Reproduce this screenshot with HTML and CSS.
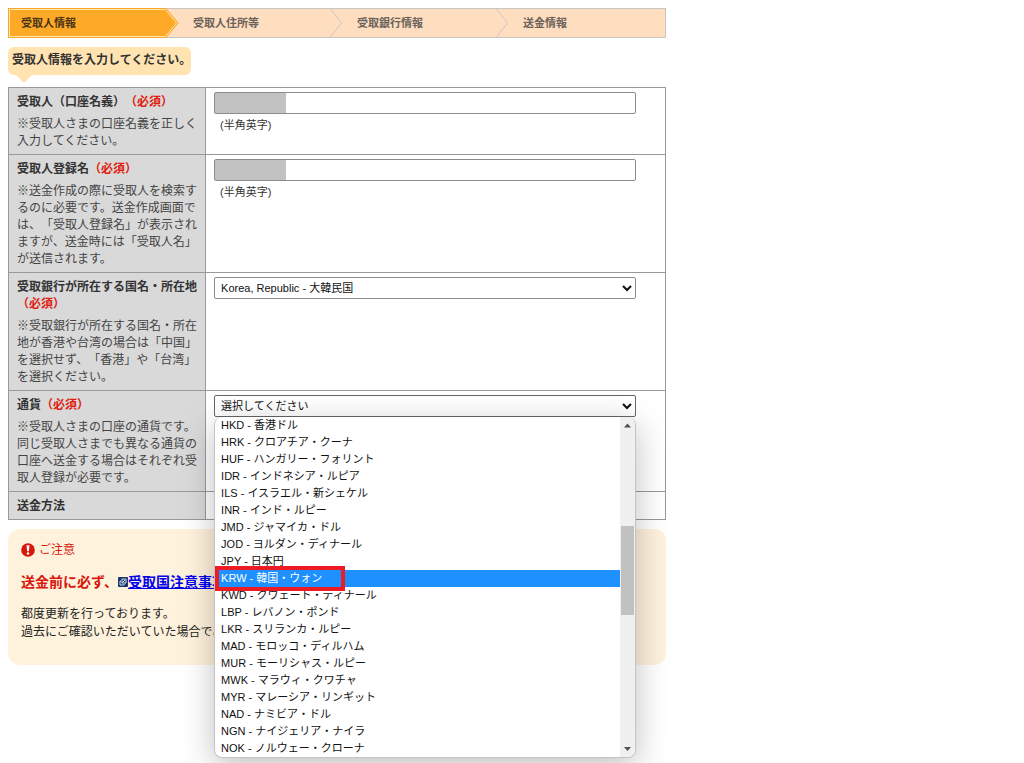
FILE: index.html
```html
<!DOCTYPE html>
<html lang="ja">
<head>
<meta charset="utf-8">
<meta name="viewport" content="width=device-width, initial-scale=1">
<title>受取人情報</title>
<link rel="stylesheet" href="styles.css">
</head>
<body>
<main class="page">
  <ol class="steps">
    <li class="step step-current" aria-current="step">
      <span>受取人情報</span>
      <svg class="step-arrow" viewBox="0 0 14 30" aria-hidden="true">
        <path d="M0 0H1L13.500 15L1 30H0Z" fill="#fca62b"/>
        <path d="M0 1.500H.5L11.500 15L.5 28.500H0" fill="#ffa929" stroke="#ffe9ae"/>
      </svg>
    </li>
    <li class="step">
      <span>受取人住所等</span>
      <svg class="step-arrow" viewBox="0 0 14 30" aria-hidden="true"><path d="M1 0L13 15L1 30" fill="none" stroke="#c8c5c2"/></svg>
    </li>
    <li class="step">
      <span>受取銀行情報</span>
      <svg class="step-arrow" viewBox="0 0 14 30" aria-hidden="true"><path d="M1 0L13 15L1 30" fill="none" stroke="#c8c5c2"/></svg>
    </li>
    <li class="step"><span>送金情報</span></li>
  </ol>

  <p class="bubble">受取人情報を入力してください。</p>

  <form>
    <table class="form-table">
      <tr>
        <th scope="row">
          <label for="payee">受取人（口座名義）<em class="required">（必須）</em></label>
          <p class="note">※受取人さまの口座名義を正しく入力してください。</p>
        </th>
        <td>
          <input class="field masked" id="payee" type="text">
          <p class="hint">(半角英字)</p>
        </td>
      </tr>
      <tr>
        <th scope="row">
          <label for="entry-name">受取人登録名<em class="required">（必須）</em></label>
          <p class="note">※送金作成の際に受取人を検索するのに必要です。送金作成画面では、「受取人登録名」が表示されますが、送金時には「受取人名」が送信されます。</p>
        </th>
        <td>
          <input class="field masked" id="entry-name" type="text">
          <p class="hint">(半角英字)</p>
        </td>
      </tr>
      <tr>
        <th scope="row">
          <label for="country">受取銀行が所在する国名・所在地<em class="required">（必須）</em></label>
          <p class="note">※受取銀行が所在する国名・所在地が香港や台湾の場合は「中国」を選択せず、「香港」や「台湾」を選択ください。</p>
        </th>
        <td>
          <select class="field" id="country"><option>Korea, Republic - 大韓民国</option></select>
        </td>
      </tr>
      <tr>
        <th scope="row">
          <label for="currency">通貨<em class="required">（必須）</em></label>
          <p class="note">※受取人さまの口座の通貨です。同じ受取人さまでも異なる通貨の口座へ送金する場合はそれぞれ受取人登録が必要です。</p>
        </th>
        <td>
          <div class="combo">
            <select class="field field-open" id="currency"><option>選択してください</option></select>
            <div class="popup">
              <ul class="options" role="listbox" aria-label="通貨">
                <li role="option">HKD - 香港ドル</li>
                <li role="option">HRK - クロアチア・クーナ</li>
                <li role="option">HUF - ハンガリー・フォリント</li>
                <li role="option">IDR - インドネシア・ルピア</li>
                <li role="option">ILS - イスラエル・新シェケル</li>
                <li role="option">INR - インド・ルピー</li>
                <li role="option">JMD - ジャマイカ・ドル</li>
                <li role="option">JOD - ヨルダン・ディナール</li>
                <li role="option">JPY - 日本円</li>
                <li role="option" class="selected" aria-selected="true">KRW - 韓国・ウォン</li>
                <li role="option">KWD - クウェート・ディナール</li>
                <li role="option">LBP - レバノン・ポンド</li>
                <li role="option">LKR - スリランカ・ルピー</li>
                <li role="option">MAD - モロッコ・ディルハム</li>
                <li role="option">MUR - モーリシャス・ルピー</li>
                <li role="option">MWK - マラウィ・クワチャ</li>
                <li role="option">MYR - マレーシア・リンギット</li>
                <li role="option">NAD - ナミビア・ドル</li>
                <li role="option">NGN - ナイジェリア・ナイラ</li>
                <li role="option">NOK - ノルウェー・クローナ</li>
              </ul>
              <div class="scrollbar" aria-hidden="true">
                <svg viewBox="0 0 15 16"><path d="M4 10.500L7.500 6.500L11 10.500Z" fill="#505050"/></svg>
                <div class="track"><div class="thumb"></div></div>
                <svg viewBox="0 0 15 16"><path d="M4 6L7.500 10L11 6Z" fill="#505050"/></svg>
              </div>
            </div>
          </div>
        </td>
      </tr>
      <tr>
        <th scope="row">送金方法</th>
        <td></td>
      </tr>
    </table>
  </form>

  <section class="notice">
    <h2 class="notice-title">
      <svg viewBox="0 0 14 14" aria-hidden="true">
        <circle cx="7" cy="7" r="6.800" fill="#d7170b"/>
        <path d="M5.500 2.300H8.500L7.900 8.200H6.100Z" fill="#fff"/>
        <circle cx="7" cy="10.500" r="1.300" fill="#fff"/>
      </svg>
      ご注意
    </h2>
    <p class="notice-lead">送金前に必ず、<svg viewBox="0 0 10 10" aria-hidden="true">
        <rect width="10" height="10" rx="1" fill="#17376e"/>
        <path d="M4 2H8V6H4ZM3 4H2V8H6V7" fill="none" stroke="#fff" stroke-width=".8"/>
        <path d="M4.500 5.500L7 3" stroke="#fff" stroke-width=".8"/>
      </svg><a href="#">受取国注意事項</a></p>
    <p>都度更新を行っております。<br>過去にご確認いただいていた場合であ</p>
  </section>
</main>
</body>
</html>
```
FILE: styles.css
```css
*,
*::before,
*::after {
  box-sizing: border-box;
}

body {
  min-height: 100vh;
  margin: 0;
  padding: 8px;
  background: #fff;
  color: #333;
  font-family: "Liberation Sans", "Noto Sans CJK JP", sans-serif;
  font-size: 12px;
  line-height: 17px;
  text-spacing-trim: space-all;
}

p,
h2,
ul,
ol {
  margin: 0;
  padding: 0;
}

.page {
  max-width: 658px;
}

/* Progress steps */
.steps {
  display: grid;
  grid-template-columns: 170fr 164fr 166fr 156fr;
  grid-template-rows: 100%;
  height: 30px;
  list-style: none;
  border: 1px solid #c8c5c2;
  background: #ffdec0;
  color: #6b625b;
  font-size: 11px;
  font-weight: bold;
}

.step {
  display: flex;
  align-items: center;
  justify-content: space-between;
  padding-left: 14px;
}

.step-current {
  margin: -1px 0 -1px -1px;
  padding-left: 0;
  color: #4a3413;
}

.step-current span {
  display: flex;
  flex: 1;
  align-items: center;
  align-self: stretch;
  padding-left: 12px;
  border: 1px solid #fca62b;
  border-right: 0;
  background: #ffa929;
  box-shadow: inset 1px 1px #ffe9ae, inset 0 -1px #ffe9ae;
}

.step-arrow {
  width: 14px;
  height: 100%;
}

/* Speech bubble */
.bubble {
  position: relative;
  width: fit-content;
  margin: 9px 0 12px;
  padding: 5px 0 6px 4px;
  border-radius: 6px;
  background: #ffe4b2;
  font-weight: bold;
}

.bubble::after {
  content: "";
  position: absolute;
  top: 100%;
  left: 8px;
  border: 8px solid transparent;
  border-top-color: #ffe4b2;
  border-bottom: 0;
}

/* Form */
.form-table {
  width: 100%;
  border-collapse: collapse;
}

.form-table th,
.form-table td {
  border: 1px solid #999;
  vertical-align: top;
  text-align: left;
}

.form-table th {
  width: 30%;
  padding: 6px 7px 4px 8px;
  background: #d9d9d9;
}

.form-table td {
  padding: 4px 29px 4px 8px;
}

.required {
  color: #e01b0f;
  font-style: normal;
}

.note {
  margin-top: 5px;
  color: #444;
  font-weight: normal;
}

.field {
  display: block;
  width: 100%;
  height: 22px;
  padding: 0 2px;
  border: 1px solid #8c8c8c;
  border-radius: 2px;
  background-color: #fff;
  color: #111;
  font-family: inherit;
  font-size: 11px;
}

.field-open {
  border-color: #666;
}

.masked {
  background-image: linear-gradient(#c2c2c2, #c2c2c2);
  background-repeat: no-repeat;
  background-size: 71px 100%;
}

.hint {
  margin: 3px 0 0 6px;
  font-size: 11px;
}

/* Open drop-down list */
.combo {
  position: relative;
}

.popup {
  position: absolute;
  z-index: 1;
  top: 100%;
  left: 0;
  display: flex;
  width: 100%;
  border: 1px solid #c4c4c4;
  border-top: 0;
  border-radius: 8px;
  background: #fff;
  box-shadow: 0 8px 32px rgba(0, 0, 0, 0.25);
}

.options {
  flex: 1;
  list-style: none;
  color: #111;
  font-size: 11px;
}

.options li {
  position: relative;
  height: 17px;
  padding-left: 6px;
  white-space: nowrap;
}

.options .selected {
  background: #1e90ff;
  color: #fff;
}

.options .selected::after {
  content: "";
  position: absolute;
  z-index: 1;
  top: -4px;
  left: 0;
  width: 130px;
  height: 25px;
  border: 4px solid #ed1c24;
}

.scrollbar {
  display: flex;
  flex-direction: column;
  width: 15px;
  border-radius: 0 8px 8px 0;
  background: #f0f0f0;
}

.scrollbar svg {
  height: 16px;
}

.track {
  flex: 1;
  padding: 0 1px;
}

.thumb {
  height: 29%;
  margin-top: 93px;
  background: #c1c1c1;
}

/* Notice */
.notice {
  min-height: 136px;
  margin-top: 9px;
  padding: 12px 13px 24px;
  border-radius: 12px;
  background: #fff2dc;
  color: #222;
  line-height: 18px;
}

.notice-title {
  display: flex;
  align-items: center;
  gap: 4px;
  color: #d7170b;
  font-size: 12px;
  font-weight: normal;
}

.notice-title svg {
  width: 14px;
  height: 14px;
}

.notice-lead {
  margin: 14px 0;
  color: #d7170b;
  font-size: 14px;
  font-weight: bold;
}

.notice-lead svg {
  width: 10px;
  height: 10px;
}

.notice-lead a {
  color: #00e;
}
```
